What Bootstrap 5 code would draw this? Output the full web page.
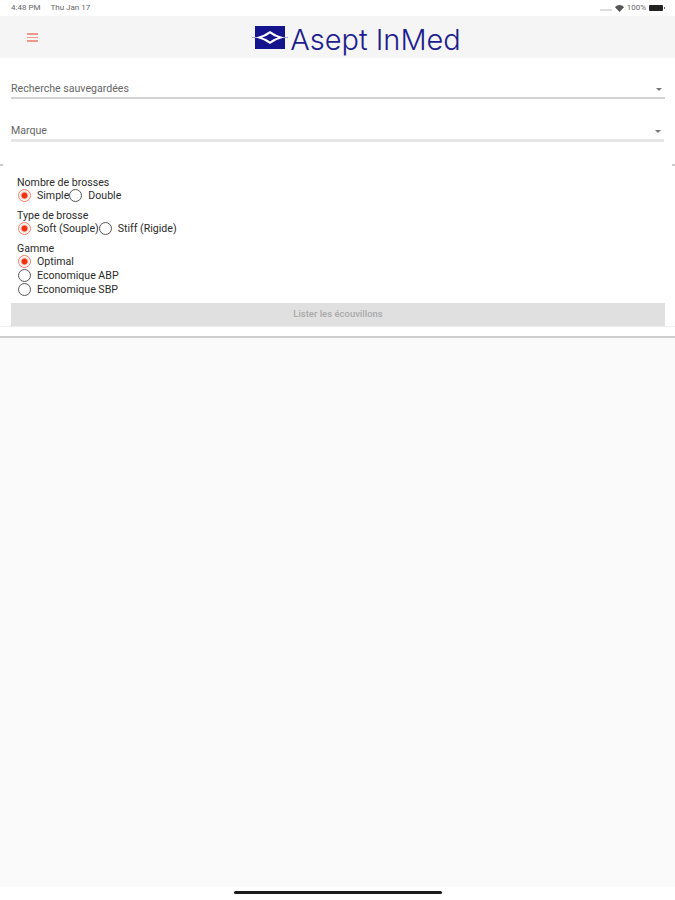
<!DOCTYPE html>
<html lang="en">
<head>
  <meta charset="UTF-8">
  <title>Asept InMed</title>
  <link href="https://cdn.jsdelivr.net/npm/bootstrap@5.3.2/dist/css/bootstrap.min.css" rel="stylesheet">
  <style>
    html, body { height: 100%; }
    body {
      width: 675px;
      height: 900px;
      overflow: hidden;
      background: #fff;
      font-family: Roboto, "Liberation Sans", sans-serif;
      color: #333;
      display: flex;
      flex-direction: column;
    }
    .status-bar {
      height: 16px;
      padding: 0 10px 0 11px;
      font-size: 8px;
      color: #666;
    }
    .status-date { margin-left: 10px; }
    .status-right { gap: 3px; }
    .status-dots {
      width: 12px;
      height: 2px;
      margin-top: 3px;
      background: #ddd;
    }
    .batt {
      width: 14px;
      height: 6px;
      background: #222;
      border-radius: 1px;
      margin-right: 2px;
      position: relative;
    }
    .batt::after {
      content: "";
      position: absolute;
      right: -2px;
      top: 2px;
      width: 1px;
      height: 2px;
      background: #666;
    }
    .app-head {
      height: 42px;
      background: #f5f5f5;
      position: relative;
    }
    .burger {
      position: absolute;
      left: 27px;
      top: 17px;
      width: 11px;
    }
    .burger span {
      display: block;
      height: 1.5px;
      background: #f0998a;
      margin-bottom: 2px;
    }
    .logo-wrap { gap: 2px; margin-left: 38px; }
    .logo-mark { margin-top: 1px; }
    .logo-text {
      font-family: Inter, "Liberation Sans", sans-serif;
      font-weight: 300;
      font-size: 29px;
      line-height: 1;
      color: #1d1d8f;
      margin-top: 4px;
    }
    .filters { padding: 0 10px 0 11px; height: 107px; }
    .pick {
      font-size: 10.6px;
      color: #666;
      border-bottom: 2px solid #d2d2d2;
      padding-bottom: 2px;
      line-height: 12px;
    }
    .pick-one { margin-top: 25px; }
    .pick-two { margin-top: 26px; border-bottom: 3px solid #e6e6e6; margin-right: 1px; }
    .caret-down {
      width: 0;
      height: 0;
      border-left: 3px solid transparent;
      border-right: 3px solid transparent;
      border-top: 3px solid #777;
      margin-right: 3px;
    }
    .opts {
      height: 161px;
      padding: 12px 10px 0 11px;
      font-size: 10.6px;
      line-height: 12px;
      color: #2b2b2b;
      position: relative;
    }
    .opts::before, .opts::after {
      content: "";
      position: absolute;
      top: -1px;
      width: 3px;
      height: 2px;
      background: #ccc;
    }
    .opts::before { left: 0; }
    .opts::after { right: 0; }
    .opt-title { padding-left: 6px; margin-bottom: -1px; }
    .opt-line { padding-left: 7px; height: 14px; }
    .opt-line span:not(.dot) { padding-top: 1px; }
    .opt-group { margin-bottom: 8px; }
    .dot {
      width: 13px;
      height: 13px;
      border: 1px solid #555;
      border-radius: 50%;
      background: #fff;
      flex: none;
      margin-right: 6px;
    }
    .dot-on {
      border-color: #f27a62;
      background: radial-gradient(circle, #f0300f 0 2.5px, #fbd5cc 3.5px, #fff 5px);
    }
    .list-btn:disabled {
      background: #e0e0e0;
      color: #aaa;
      opacity: 1;
      font-size: 9.5px;
      font-weight: 500;
      height: 23px;
      margin-top: 7px;
      border: 0;
      border-radius: 0;
      width: 100%;
      padding: 0;
    }
    .page-rest {
      flex: 1;
      background: #fafafa;
      border-top: 2px solid #cfcfcf;
    }
    .opts-foot {
      height: 10px;
      background: #fff;
      border-top: 1px solid #eee;
    }
    .home-strip {
      height: 13px;
      background: #fff;
    }
    .home-bar {
      width: 208px;
      height: 3px;
      background: #1a1a1a;
      border-radius: 2px;
      margin-top: 4px;
    }
  </style>
</head>
<body>
  <div class="status-bar d-flex justify-content-between align-items-center">
    <span>4:48 PM<span class="status-date">Thu Jan 17</span></span>
    <span class="status-right d-flex align-items-center">
      <span class="status-dots"></span>
      <svg width="9" height="7" viewBox="0 0 9 7"><path d="M4.5 7 0 2.2C2.6-.7 6.4-.7 9 2.2z" fill="#555"/></svg>
      <span>100%</span>
      <span class="batt"></span>
    </span>
  </div>

  <div class="app-head d-flex align-items-center justify-content-center">
    <div class="burger"><span></span><span></span><span></span></div>
    <div class="logo-wrap d-flex align-items-center">
      <svg class="logo-mark" width="36" height="24" viewBox="0 0 36 24">
        <rect x="3" y="0" width="30" height="23" fill="#14148c"/>
        <path d="M0 11.5H36" stroke="#9aa0d0" stroke-width="1"/>
        <path d="M4 11.5Q11 10 18 5 25 10 32 11.5 25 13 18 18 11 13 4 11.5z" fill="#fff"/>
        <path d="M10 11.5Q15 10 18 7.5 21 10 26 11.5 21 13 18 15.5 15 13 10 11.5z" fill="#14148c"/>
      </svg>
      <span class="logo-text">Asept InMed</span>
    </div>
  </div>

  <div class="filters">
    <div class="pick pick-one d-flex justify-content-between align-items-center">
      <span>Recherche sauvegardées</span><span class="caret-down"></span>
    </div>
    <div class="pick pick-two d-flex justify-content-between align-items-center">
      <span>Marque</span><span class="caret-down"></span>
    </div>
  </div>

  <div class="opts">
    <div class="opt-group">
      <div class="opt-title">Nombre de brosses</div>
      <div class="opt-line d-flex align-items-center">
        <span class="dot dot-on"></span><span>Simple</span>
        <span class="dot"></span><span>Double</span>
      </div>
    </div>
    <div class="opt-group">
      <div class="opt-title">Type de brosse</div>
      <div class="opt-line d-flex align-items-center">
        <span class="dot dot-on"></span><span>Soft (Souple)</span>
        <span class="dot"></span><span>Stiff (Rigide)</span>
      </div>
    </div>
    <div>
      <div class="opt-title">Gamme</div>
      <div class="opt-line d-flex align-items-center"><span class="dot dot-on"></span><span>Optimal</span></div>
      <div class="opt-line d-flex align-items-center"><span class="dot"></span><span>Economique ABP</span></div>
      <div class="opt-line d-flex align-items-center"><span class="dot"></span><span>Economique SBP</span></div>
    </div>
    <button class="btn list-btn" disabled>Lister les écouvillons</button>
  </div>
  <div class="opts-foot"></div>

  <div class="page-rest"></div>
  <div class="home-strip d-flex justify-content-center"><div class="home-bar"></div></div>

  <script src="https://cdn.jsdelivr.net/npm/bootstrap@5.3.2/dist/js/bootstrap.bundle.min.js"></script>
</body>
</html>
